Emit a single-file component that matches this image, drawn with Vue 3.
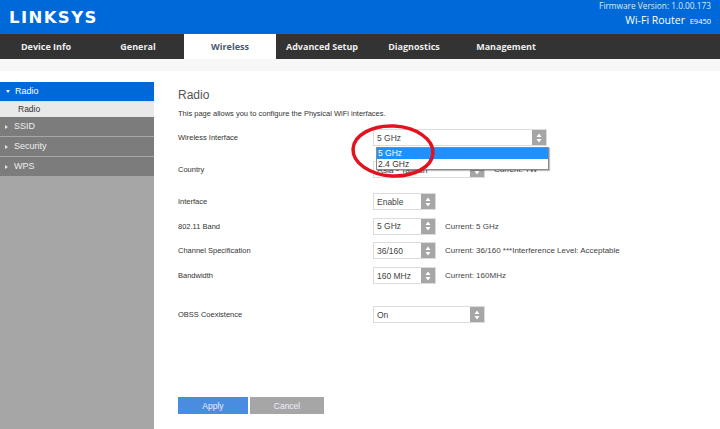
<template>
  <div class="page">
    <header class="top">
      <div class="logo">LINKSYS</div>
      <div class="info">
        <div class="firmware">Firmware Version: 1.0.00.173</div>
        <div class="product">Wi-Fi Router <span class="model">E9450</span></div>
      </div>
    </header>

    <nav class="tabs">
      <div v-for="tab in tabs" :key="tab" class="tab" :class="{ active: tab === 'Wireless' }">{{ tab }}</div>
    </nav>
    <div class="strip"></div>

    <div class="body">
      <aside class="side">
        <div class="side-item open"><span class="tri-down"></span>Radio</div>
        <div class="side-sub">Radio</div>
        <div v-for="item in sideItems" :key="item" class="side-item"><span class="tri-right"></span>{{ item }}</div>
        <div class="side-fill"></div>
      </aside>

      <main class="content">
        <h1>Radio</h1>
        <p class="desc">This page allows you to configure the Physical WiFi interfaces.</p>

        <div v-for="row in rows" :key="row.label" class="row" :class="row.gap">
          <label>{{ row.label }}</label>
          <div class="select" :class="row.size">
            <span class="value">{{ row.value }}</span>
            <span class="arrows">
              <svg width="6" height="10" viewBox="0 0 6 10"><path d="M3 0.5 5.5 4H.5zM3 9.5.5 6h5z" fill="#fff"/></svg>
            </span>
            <div v-if="row.open" class="popup">
              <div class="opt on">5 GHz</div>
              <div class="opt">2.4 GHz</div>
            </div>
          </div>
          <span v-if="row.current" class="current">{{ row.current }}</span>
        </div>

        <div class="buttons">
          <button class="btn apply">Apply</button>
          <button class="btn cancel">Cancel</button>
        </div>
      </main>
    </div>

    <svg class="circle" width="90" height="62" viewBox="0 0 90 62">
      <ellipse cx="45" cy="29" rx="40" ry="25" transform="rotate(3 45 29)" fill="none" stroke="#e2121f" stroke-width="3.5"/>
    </svg>
  </div>
</template>

<script setup>
const tabs = ['Device Info', 'General', 'Wireless', 'Advanced Setup', 'Diagnostics', 'Management']
const sideItems = ['SSID', 'Security', 'WPS']

const rows = [
  { label: 'Wireless Interface', value: '5 GHz', size: 'wide', open: true },
  { label: 'Country', value: 'Asia - Taiwan', size: 'mid', current: 'Current: TW', gap: 'gap-lg' },
  { label: 'Interface', value: 'Enable', size: 'small', gap: 'gap-lg' },
  { label: '802.11 Band', value: '5 GHz', size: 'small', current: 'Current: 5 GHz', gap: 'gap-sm' },
  { label: 'Channel Specification', value: '36/160', size: 'small', current: 'Current: 36/160 ***Interference Level: Acceptable', gap: 'gap-sm' },
  { label: 'Bandwidth', value: '160 MHz', size: 'small', current: 'Current: 160MHz', gap: 'gap-md' },
  { label: 'OBSS Coexistence', value: 'On', size: 'mid', gap: 'gap-xl' }
]
</script>

<style>
html, body {
  margin: 0;
  background: #fff;
}
</style>

<style scoped>
.page {
  position: relative;
  width: 720px;
  height: 429px;
  overflow: hidden;
  display: flex;
  flex-direction: column;
  font-family: "Liberation Sans", Arial, sans-serif;
  color: #444;
}

.top {
  height: 34px;
  flex: none;
  background: #0069d9;
  color: #fff;
  display: flex;
  justify-content: space-between;
  padding: 0 9px;
}

.logo {
  font-family: "DejaVu Sans", sans-serif;
  font-weight: 700;
  font-size: 16.5px;
  line-height: 36px;
  letter-spacing: 1.4px;
}

.info {
  text-align: right;
  padding-top: 1px;
}

.firmware {
  font-family: "Open Sans", sans-serif;
  font-size: 8.3px;
  line-height: 10px;
  color: #dfeaf8;
}

.product {
  font-family: "Open Sans", sans-serif;
  font-size: 10.5px;
  line-height: 16px;
  margin-top: 1px;
}

.model {
  font-size: 7.5px;
  margin-left: 2px;
}

.tabs {
  height: 25px;
  flex: none;
  background: #333;
  display: flex;
}

.tab {
  width: 92px;
  text-align: center;
  font-family: "Open Sans", sans-serif;
  font-size: 9px;
  font-weight: 700;
  line-height: 25px;
  color: #eee;
}

.tab.active {
  background: #fff;
  color: #4a5a70;
}

.strip {
  height: 12px;
  flex: none;
  background: #f7f7f7;
}

.body {
  flex: 1;
  display: flex;
  min-height: 0;
}

.side {
  width: 154px;
  flex: none;
  margin-top: 11px;
  display: flex;
  flex-direction: column;
  background: #a6a6a6;
}

.side-item {
  height: 19px;
  margin-bottom: 1px;
  background: #7c7c7c;
  color: #eee;
  font-size: 9px;
  line-height: 19px;
  display: flex;
  align-items: center;
  padding-left: 5px;
}

.side-item.open {
  background: #0069d9;
  color: #fff;
  padding-left: 6px;
  margin-bottom: 0;
  border-bottom: 1px solid #dcdcdc;
}

.tri-right {
  width: 0;
  height: 0;
  border-left: 3px solid #e4e4e4;
  border-top: 2.5px solid transparent;
  border-bottom: 2.5px solid transparent;
  margin-right: 6px;
}

.tri-down {
  width: 0;
  height: 0;
  border-top: 3px solid #fff;
  border-left: 2.5px solid transparent;
  border-right: 2.5px solid transparent;
  margin-right: 5px;
}

.side-sub {
  height: 15px;
  background: #e9e9e9;
  color: #333;
  font-size: 8.5px;
  line-height: 15px;
  padding-left: 18px;
}

.side-fill {
  flex: 1;
}

.content {
  flex: 1;
  padding: 16px 0 0 24px;
}

h1 {
  margin: 0;
  font-size: 12px;
  font-weight: 400;
  line-height: 16px;
  color: #555;
}

.desc {
  margin: 6px 0 10px;
  font-size: 7.5px;
  line-height: 10px;
  color: #333;
}

.row {
  display: flex;
  align-items: center;
  height: 17px;
  font-size: 8px;
}

.row.gap-sm {
  margin-top: 7.5px;
}

.row.gap-md {
  margin-top: 8px;
}

.row.gap-lg {
  margin-top: 15px;
}

.row.gap-xl {
  margin-top: 22px;
}

label {
  width: 195px;
  flex: none;
  font-size: 7.5px;
  color: #333;
}

.select {
  position: relative;
  box-sizing: border-box;
  height: 17px;
  display: flex;
  align-items: center;
  justify-content: space-between;
  border: 1px solid #dcdcdc;
  background: #fff;
  color: #444;
  font-size: 8.5px;
}

.select.wide {
  width: 174px;
}

.select.mid {
  width: 112px;
}

.select.small {
  width: 63px;
}

.value {
  padding-left: 3px;
  white-space: nowrap;
}

.arrows {
  width: 14px;
  height: 15px;
  background: #a6a6a6;
  display: flex;
  align-items: center;
  justify-content: center;
}

.popup {
  position: absolute;
  z-index: 2;
  top: 17px;
  left: 2px;
  width: 171px;
  border: 1px solid #8a8a8a;
  background: #fff;
  box-shadow: 1px 1px 1px rgba(0, 0, 0, 0.25);
}

.opt {
  height: 10.5px;
  line-height: 10.5px;
  padding-left: 1px;
  color: #333;
}

.opt.on {
  background: #1e90ff;
  color: #fff;
}

.current {
  margin-left: 9px;
  color: #444;
}

.buttons {
  display: flex;
  gap: 2px;
  margin-top: 74px;
}

.btn {
  height: 17px;
  border: none;
  padding: 0;
  font-family: inherit;
  font-size: 8.5px;
  color: #eef;
}

.apply {
  width: 70px;
  background: #4a8de0;
}

.cancel {
  width: 74px;
  background: #a6a6a6;
  font-size: 8.5px;
}

.circle {
  position: absolute;
  left: 348px;
  top: 122px;
  z-index: 3;
}
</style>
